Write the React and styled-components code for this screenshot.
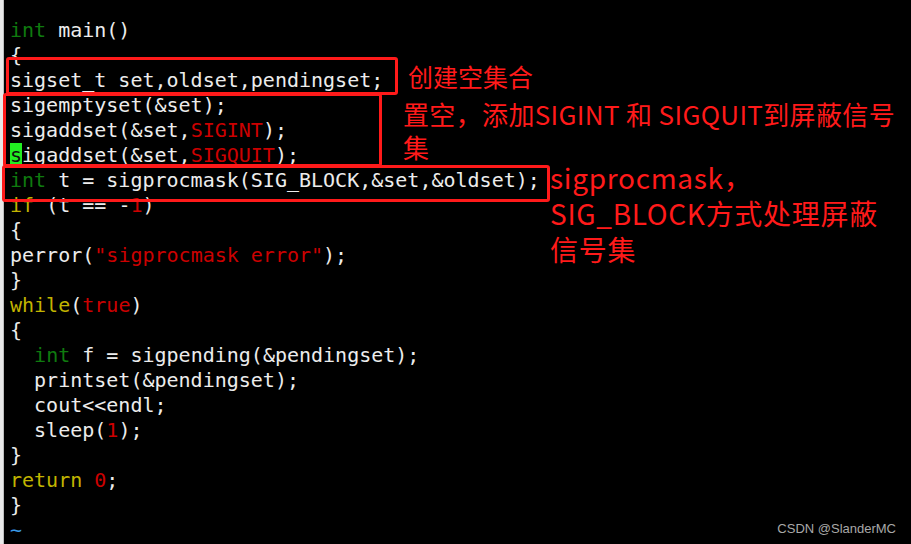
import styled, { createGlobalStyle } from 'styled-components'

const GlobalStyle = createGlobalStyle`
	html, body {
		margin: 0;
		padding: 0;
		background: #000;
	}
`

const lines = [
	[['kw', 'int'], ['', ' main()']],
	[['', '{']],
	[['', 'sigset_t set,oldset,pendingset;']],
	[['', 'sigemptyset(&set);']],
	[['', 'sigaddset(&set,'], ['lit', 'SIGINT'], ['', ');']],
	[['cursor', 's'], ['', 'igaddset(&set,'], ['lit', 'SIGQUIT'], ['', ');']],
	[['kw', 'int'], ['', ' t = sigprocmask(SIG_BLOCK,&set,&oldset);']],
	[['ctl', 'if'], ['', ' (t == -'], ['lit', '1'], ['', ')']],
	[['', '{']],
	[['', 'perror('], ['lit', '"sigprocmask error"'], ['', ');']],
	[['', '}']],
	[['ctl', 'while'], ['', '('], ['lit', 'true'], ['', ')']],
	[['', '{']],
	[['', '  '], ['kw', 'int'], ['', ' f = sigpending(&pendingset);']],
	[['', '  printset(&pendingset);']],
	[['', '  cout<<endl;']],
	[['', '  sleep('], ['lit', '1'], ['', ');']],
	[['', '}']],
	[['ctl', 'return'], ['', ' '], ['lit', '0'], ['', ';']],
	[['', '}']],
	[['tilde', '~']],
]

// red annotation frames drawn over the terminal
const boxes = [
	{ left: 6, top: 57, width: 392, height: 38 },
	{ left: 3, top: 93, width: 379, height: 74 },
	{ left: 2, top: 165, width: 548, height: 37 },
]

const App = () => {
	return (
		<>
			<GlobalStyle />
			<Screen>
				<Gutter />
				<Code>
					{lines.map((line, i) => (
						<Line key={i}>
							{line.map(([kind, text], j) => (
								<Token key={j} $kind={kind}>{text}</Token>
							))}
						</Line>
					))}
				</Code>

				{boxes.map((b, i) => (
					<Marker key={i} $left={b.left} $top={b.top} $width={b.width} $height={b.height} />
				))}

				<Note $left={408} $top={60} $size={25} $width={480} $lh={32}>创建空集合</Note>
				<Note $left={403} $top={97} $size={26} $width={500} $lh={33} $ls={0.35}>
					置空，添加SIGINT 和 SIGQUIT到屏蔽信号集
				</Note>
				<Note $left={550} $top={159} $size={28} $width={340} $lh={36} $ls={0.7}>
					sigprocmask，<br />SIG_BLOCK方式处理屏蔽信号集
				</Note>

				<Watermark>CSDN @SlanderMC</Watermark>
			</Screen>
		</>
	)
}

export default App

const Screen = styled.div`
	position: relative;
	width: 911px;
	height: 544px;
	background: #000;
	overflow: hidden;
	display: flex;
`

const Gutter = styled.div`
	width: 3px;
	flex: none;
	background: #e9e9e9;
	border-right: 1px solid #bdbdbd;
`

const Code = styled.div`
	padding: 18px 0 0 6px;
	font-family: "DejaVu Sans Mono", monospace;
	font-size: 20px;
	line-height: 25px;
	color: #ececec;
	white-space: pre;
`

const Line = styled.div`
	height: 25px;
`

const tokenColors = {
	kw: '#0f7a0f',
	ctl: '#c2b400',
	lit: '#cc0000',
	tilde: '#3a9be8',
	cursor: '#101010',
}

const Token = styled.span`
	color: ${props => tokenColors[props.$kind] || 'inherit'};
	${props => props.$kind === 'cursor' && `
		background: #22ee22;
		display: inline-block;
		height: 25px;
	`}
`

const Marker = styled.div`
	position: absolute;
	left: ${props => props.$left}px;
	top: ${props => props.$top}px;
	width: ${props => props.$width}px;
	height: ${props => props.$height}px;
	box-sizing: border-box;
	border: 3px solid #ff1a1a;
	border-radius: 3px;
`

const Note = styled.div`
	position: absolute;
	left: ${props => props.$left}px;
	top: ${props => props.$top}px;
	width: ${props => props.$width}px;
	font-family: "Noto Sans CJK SC", "Noto Sans", sans-serif;
	font-size: ${props => props.$size}px;
	line-height: ${props => props.$lh}px;
	letter-spacing: ${props => props.$ls || 0}px;
	color: #ff1a1a;
`

const Watermark = styled.div`
	position: absolute;
	right: 15px;
	bottom: 8px;
	font-family: "Liberation Sans", Arial, sans-serif;
	font-size: 13px;
	color: #a8a8a8;
`
